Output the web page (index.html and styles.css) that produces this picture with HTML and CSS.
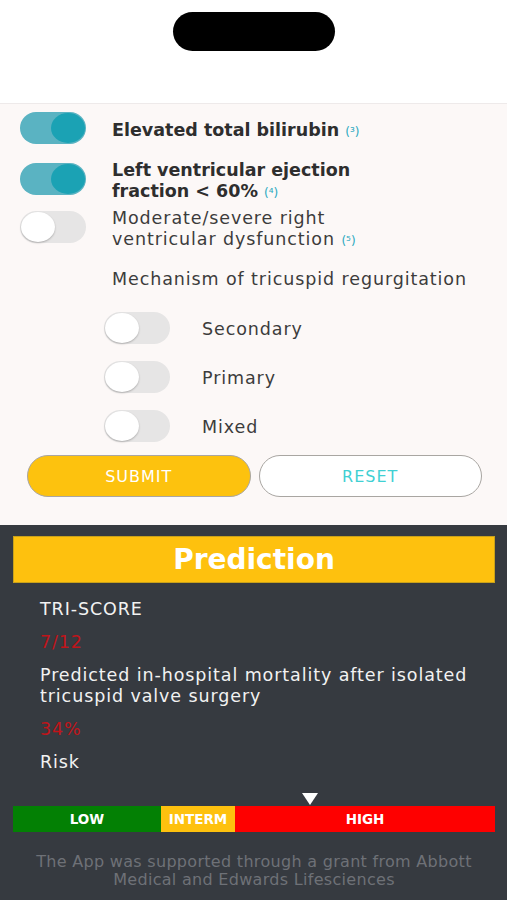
FILE: index.html
```html
<!DOCTYPE html>
<html lang="en">
<head>
  <meta charset="UTF-8">
  <title>TRI-SCORE</title>
  <link rel="stylesheet" href="styles.css">
</head>
<body>
  <div class="top-bar">
    <div class="island"></div>
  </div>

  <!-- Formulario -->
  <div class="form">
    <div class="row">
      <span class="toggle on"></span>
      <div class="label bold">Elevated total bilirubin <span class="ref">(³)</span></div>
    </div>
    <div class="row row2">
      <span class="toggle on"></span>
      <div class="label bold">Left ventricular ejection<br>fraction &lt; 60% <span class="ref">(⁴)</span></div>
    </div>
    <div class="row row3">
      <span class="toggle"></span>
      <div class="label">Moderate/severe right<br>ventricular dysfunction <span class="ref">(⁵)</span></div>
    </div>

    <div class="group-title">Mechanism of tricuspid regurgitation</div>

    <div class="sub-row">
      <span class="toggle"></span>
      <div class="sub-label">Secondary</div>
    </div>
    <div class="sub-row">
      <span class="toggle"></span>
      <div class="sub-label">Primary</div>
    </div>
    <div class="sub-row">
      <span class="toggle"></span>
      <div class="sub-label">Mixed</div>
    </div>

    <div class="buttons">
      <button class="btn submit">SUBMIT</button>
      <button class="btn reset">RESET</button>
    </div>
  </div>

  <!-- Resultado -->
  <div class="result">
    <div class="banner">Prediction</div>
    <div class="res-text first">TRI-SCORE</div>
    <div class="res-value">7/12</div>
    <div class="res-text">Predicted in-hospital mortality after isolated<br>tricuspid valve surgery</div>
    <div class="res-value">34%</div>
    <div class="res-text">Risk</div>

    <div class="marker-line"><span class="marker"></span></div>
    <div class="risk-bar">
      <div class="seg low">LOW</div>
      <div class="seg interm">INTERM</div>
      <div class="seg high">HIGH</div>
    </div>

    <p class="footer">The App was supported through a grant from Abbott<br>Medical and Edwards Lifesciences</p>
  </div>
</body>
</html>
```

FILE: styles.css
```css
body {
  margin: 0;
  font-family: 'DejaVu Sans', sans-serif;
  color: #333;
  background-color: #363a40;
}
.top-bar {
  height: 103px;
  background-color: #fff;
  border-bottom: 1px solid #eeeaea;
  display: flex;
  justify-content: center;
}
.island {
  width: 162px;
  height: 39px;
  margin-top: 12px;
  background-color: #000;
  border-radius: 20px;
}
.form {
  background-color: #fcf8f7;
  padding: 8px 0 28px;
}
.row {
  display: flex;
  align-items: center;
  padding-left: 20px;
}
.row2 {
  margin-top: 10px;
}
.row3 {
  margin-top: -2px;
}
.toggle {
  position: relative;
  flex: none;
  width: 66px;
  height: 32px;
  border-radius: 16px;
  background-color: #e6e5e5;
}
.toggle::after {
  content: '';
  position: absolute;
  top: 1px;
  left: 1px;
  width: 34px;
  height: 30px;
  border-radius: 50%;
  background-color: #fff;
  box-shadow: 0 1px 2px rgba(0, 0, 0, 0.25);
}
.toggle.on {
  background-color: #5ab3c2;
}
.toggle.on::after {
  left: auto;
  right: 1px;
  background-color: #1ba2b4;
  box-shadow: none;
}
.label {
  margin-left: 26px;
  padding-top: 6px;
  font-size: 17.5px;
  line-height: 21px;
  letter-spacing: 0.9px;
  color: #3c3c3c;
}
.label.bold {
  font-weight: bold;
  letter-spacing: 0;
  color: #2e2e2e;
}
.ref {
  font-size: 12px;
  font-weight: normal;
  letter-spacing: 0;
  color: #2aa8c0;
}
.group-title {
  margin: 17px 0 0 112px;
  font-size: 17.5px;
  line-height: 21px;
  letter-spacing: 0.9px;
  color: #3c3c3c;
}
.sub-row {
  display: flex;
  align-items: center;
  padding-left: 104px;
  margin-top: 22px;
}
.sub-row + .sub-row {
  margin-top: 17px;
}
.sub-label {
  margin-left: 32px;
  padding-top: 2px;
  font-size: 17.5px;
  letter-spacing: 0.9px;
  color: #3c3c3c;
}
.buttons {
  display: flex;
  gap: 8px;
  padding: 0 25px 0 27px;
  margin-top: 13px;
}
.btn {
  flex: 1;
  height: 42px;
  border-radius: 21px;
  border: 1px solid #a9a6a2;
  font-family: 'DejaVu Sans', sans-serif;
  font-size: 16px;
  letter-spacing: 1px;
}
.submit {
  background-color: #fdc20e;
  color: #fff;
}
.reset {
  background-color: #fff;
  color: #3fd0d3;
}
.result {
  padding: 11px 12px 0 13px;
  height: 365px;
  color: #f2f2f2;
}
.banner {
  height: 45px;
  line-height: 45px;
  background-color: #fec10e;
  border: 1px solid #c9a11b;
  text-align: center;
  font-size: 28px;
  font-weight: bold;
  color: #fff;
}
.res-text {
  margin: 12px 0 0 27px;
  font-size: 17.5px;
  line-height: 21px;
  letter-spacing: 0.9px;
}
.res-text.first {
  margin-top: 16px;
}
.res-value {
  margin: 12px 0 0 27px;
  font-size: 17.5px;
  line-height: 21px;
  letter-spacing: 0.9px;
  color: #c0141a;
}
.marker-line {
  height: 15px;
  margin-top: 18px;
  position: relative;
}
.marker {
  position: absolute;
  left: 289px;
  top: 2px;
  width: 0;
  height: 0;
  border-left: 8px solid transparent;
  border-right: 8px solid transparent;
  border-top: 12px solid #fff;
}
.risk-bar {
  display: flex;
  height: 26px;
}
.seg {
  display: flex;
  align-items: center;
  justify-content: center;
  font-size: 13.5px;
  font-weight: bold;
  color: #fff;
}
.low {
  width: 148px;
  background-color: #038004;
}
.interm {
  width: 74px;
  background-color: #fec10e;
}
.high {
  flex: 1;
  background-color: #fe0000;
}
.footer {
  margin: 21px 0 0;
  text-align: center;
  font-size: 16px;
  line-height: 18px;
  letter-spacing: 0.3px;
  color: #6e7177;
}
```
